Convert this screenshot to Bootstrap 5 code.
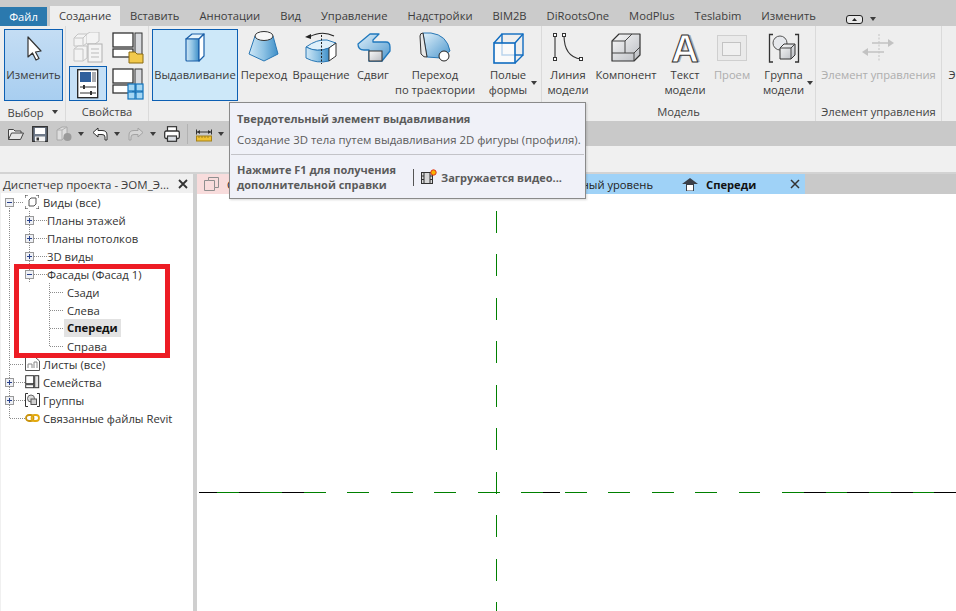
<!DOCTYPE html>
<html lang="ru">
<head>
    <meta charset="UTF-8">
    <meta name="viewport" content="width=device-width, initial-scale=1.0">
    <title>Revit - Создание</title>
    <link href="https://cdn.jsdelivr.net/npm/bootstrap@5.3.0/dist/css/bootstrap.min.css" rel="stylesheet">
    <style>
        html, body { height: 100%; overflow: hidden; }
        body { font-family: "Open Sans", "Liberation Sans", sans-serif; font-size: 11.2px; line-height: 15px; color: #3b3b3b; background: #fff; }
        svg { display: block; }
        .svg-defs { width: 0; height: 0; position: absolute; }
        .app-shell { width: 956px; height: 611px; overflow: hidden; position: relative; }

        .tab-strip { height: 26px; background: #cbcbcb; padding-top: 6px; flex-wrap: nowrap; }
        .tab-strip .nav-link { color: #3d3d3d; padding: 2px 10px 0; height: 20px; line-height: 15px; white-space: nowrap; }
        .tab-strip .tab-file { width: 47px; margin-right: 3px; background: #2b79ae; color: #fff; text-align: center; padding: 2px 0 0; margin-top: 1px; height: 19px; }
        .tab-strip .tab-on { background: #eeeeee; width: 70px; padding-left: 9px; }
        .view-toggle { margin-left: 20px; margin-top: 6px; }

        .ribbon-band { height: 95px; background: #eeeeee; overflow: hidden; }
        .rib-panel { height: 95px; border-right: 1px solid #dadada; flex: none; }
        .pw-66 { width: 66px; } .pw-83 { width: 83px; } .pw-393 { width: 393px; } .pw-274 { width: 274px; } .pw-126 { width: 126px; }
        .rib-tools { height: 77px; padding-top: 3px; }
        .rib-tail { padding-left: 6px; }
        .rib-label { height: 18px; line-height: 17px; text-align: center; color: #444; white-space: nowrap; }
        .rb { flex: none; height: 72px; text-align: center; position: relative; white-space: nowrap; }
        .bw-40 { width: 40px; } .bw-50 { width: 50px; } .bw-52 { width: 52px; } .bw-54 { width: 54px; } .bw-59 { width: 59px; }
        .bw-62 { width: 62px; } .bw-63 { width: 63px; } .bw-64 { width: 64px; } .bw-84 { width: 84px; } .bw-86 { width: 86px; }
        .rb-ic { height: 38px; padding-top: 2px; display: flex; justify-content: center; }
        .rb-on { border: 1px solid #0c5fb3; }
        .rb-on .rb-ic { padding-top: 1px; height: 37px; }
        .rb-modify { background: linear-gradient(#c4ddf4, #a8cef0); }
        .rb-hot { background: #cde8f9; margin-left: 3px; margin-right: 1px; }
        .rb-off { color: #adadad; }
        .glyph-a { font-family: "Liberation Sans", sans-serif; font-weight: 700; font-size: 38px; line-height: 36px; color: #fff; -webkit-text-stroke: 1px #333; text-shadow: 2px 0 0 #a4a7ad; }
        .drop-mark { position: absolute; right: 2px; top: 52px; }
        .prop-grid { display: grid; grid-template-columns: 38px 38px; grid-template-rows: 37px 35px; column-gap: 2px; margin-left: 3px; }
        .prop-cell { display: flex; justify-content: center; align-items: center; }
        .prop-on { border: 1px solid #0c5fb3; background: #c6e0f6; }

        .mini-caret { width: 0; height: 0; border-left: 3px solid transparent; border-right: 3px solid transparent; border-top: 4px solid #3c3c3c; flex: none; display: inline-block; }
        .qat-bar { height: 25px; background: #c9c9c9; padding-left: 8px; gap: 8px; }
        .qat-bar .mini-caret { margin-left: -2px; }
        .qat-sep { width: 1px; height: 20px; background: #b2b2b2; margin-left: -1px; }
        .options-bar { height: 26px; background: #f0f0f0; }

        .work-area { height: 439px; background: #d3d3d3; padding-top: 2px; }
        .browser-pane { width: 197px; flex: none; background: #f0f0f0; border-right: 4px solid #cfcfcf; position: relative; height: 100%; }
        .browser-head { height: 19px; padding: 1px 5px 0 3px; font-size: 11.5px; white-space: nowrap; color: #3b3b3b; }
        .browser-tree { background: #fff; height: 418px; margin-left: 1px; overflow: hidden; }
        .tree-row { height: 18px; display: flex; align-items: center; white-space: nowrap; color: #333; font-size: 11.3px; }
        .t-cell { width: 20px; height: 18px; flex: none; display: flex; align-items: center; justify-content: flex-start; background-repeat: no-repeat; }
        .t-deep { width: 26px; }
        .t-wide { width: 24px; }
        .t-full { background-image: repeating-linear-gradient(to bottom, #8c8c8c 0 1px, transparent 1px 2px); background-size: 1px 18px; background-position: 8px 0; }
        .t-end { background-image: repeating-linear-gradient(to bottom, #8c8c8c 0 1px, transparent 1px 2px), repeating-linear-gradient(to right, #8c8c8c 0 1px, transparent 1px 2px); background-size: 1px 9px, 14px 1px; background-position: 8px 0, 9px 9px; }
        .t-long { background-size: 1px 9px, 16px 1px; }
        .t-tee { background-image: repeating-linear-gradient(to bottom, #8c8c8c 0 1px, transparent 1px 2px), repeating-linear-gradient(to right, #8c8c8c 0 1px, transparent 1px 2px); background-size: 1px 18px, 14px 1px; background-position: 8px 0, 9px 9px; }
        .t-boxed { background-image: repeating-linear-gradient(to bottom, #8c8c8c 0 1px, transparent 1px 2px), repeating-linear-gradient(to right, #8c8c8c 0 1px, transparent 1px 2px); background-size: 1px 18px, 14px 1px; background-position: 8px 0, 13px 9px; }
        .t-first { background-image: repeating-linear-gradient(to bottom, #8c8c8c 0 1px, transparent 1px 2px), repeating-linear-gradient(to right, #8c8c8c 0 1px, transparent 1px 2px); background-size: 1px 9px, 10px 1px; background-position: 8px 9px, 13px 9px; }
        .t-box { width: 9px; height: 9px; margin-left: 4px; border: 1px solid #999; background: #eef0f5; position: relative; flex: none; }
        .t-box::before { content: ""; position: absolute; left: 1px; top: 3px; width: 5px; height: 1px; background: #27408b; }
        .t-plus::after { content: ""; position: absolute; left: 3px; top: 1px; width: 1px; height: 5px; background: #27408b; }
        .t-ic { width: 18px; flex: none; }
        .t-current { background: #e2e2e2; font-weight: 700; color: #111; padding: 0 3px; margin-left: -3px; height: 18px; line-height: 18px; }
        .red-mark { position: absolute; left: 14px; top: 90px; width: 156px; height: 94px; border: 5px solid #ed1c24; pointer-events: none; }

        .view-pane { flex: 1; min-width: 0; background: #fff; }
        .view-tabs { height: 20px; background: #c9c9c9; white-space: nowrap; overflow: hidden; }
        .vtab { height: 20px; display: flex; align-items: center; flex: none; color: #222; }
        .vtab-start { width: 263px; background: #f8dcdc; padding-left: 7px; gap: 8px; }
        .vtab-mid { width: 210px; background: #9fd2f7; justify-content: flex-end; padding-right: 17px; }
        .vtab-now { width: 135px; background: #9fd2f7; padding-left: 12px; font-weight: 700; color: #111; }
        .vtab-now .vtab-x { margin-left: auto; margin-right: 5px; }
        .draw-area { width: 759px; height: 417px; }

        .tip-box { position: absolute; left: 229px; top: 102px; width: 357px; height: 97px; background: #f0f1f8; border: 1px solid #8a8a8a; color: #5b5b5b; padding: 8px 7px 0; box-shadow: 1px 1px 2px rgba(0,0,0,.15); }
        .tip-title { font-weight: 700; font-size: 11px; }
        .tip-desc { margin-top: 6px; white-space: nowrap; font-size: 11.4px; }
        .tip-rule { height: 1px; background: #c3c3c8; margin: 7px -6px 0; }
        .tip-foot { margin-top: 7px; font-weight: 700; font-size: 11px; }
        .tip-help { width: 176px; white-space: nowrap; }
        .tip-sep { width: 1px; height: 17px; background: #555; margin-right: 7px; }
        .tip-video { white-space: nowrap; gap: 4px; }
    </style>
</head>
<body>

<svg class="svg-defs">
    <defs>
        <linearGradient id="gBlue" x1="0" y1="0" x2="1" y2="1"><stop offset="0" stop-color="#dff0fa"/><stop offset="1" stop-color="#4d97cd"/></linearGradient>
        <linearGradient id="gSide" x1="0" y1="0" x2="1" y2="0"><stop offset="0" stop-color="#cfe7f6"/><stop offset=".5" stop-color="#8dc2e4"/><stop offset="1" stop-color="#3f8fc8"/></linearGradient>
        <linearGradient id="gGrey" x1="0" y1="0" x2="1" y2="1"><stop offset="0" stop-color="#fafafa"/><stop offset="1" stop-color="#b9bcc2"/></linearGradient>
    </defs>
</svg>

<div class="app-shell">
    <!-- ribbon tabs -->
    <nav class="nav tab-strip">
        <a class="nav-link tab-file" href="#">Файл</a>
        <a class="nav-link tab-on" href="#">Создание</a>
        <a class="nav-link" href="#">Вставить</a>
        <a class="nav-link" href="#">Аннотации</a>
        <a class="nav-link" href="#">Вид</a>
        <a class="nav-link" href="#">Управление</a>
        <a class="nav-link" href="#">Надстройки</a>
        <a class="nav-link" href="#">BIM2B</a>
        <a class="nav-link" href="#">DiRootsOne</a>
        <a class="nav-link" href="#">ModPlus</a>
        <a class="nav-link" href="#">Teslabim</a>
        <a class="nav-link" href="#">Изменить</a>
        <div class="view-toggle d-flex align-items-center gap-1">
            <svg width="20" height="9" viewBox="0 0 20 9"><rect x=".5" y=".5" width="16" height="8" rx="2.5" fill="#e8e8e8" stroke="#222"/><path d="M6 6 H11 L8.500 3 Z" fill="#222"/></svg>
            <span class="mini-caret"></span>
        </div>
    </nav>

    <!-- ribbon -->
    <div class="ribbon-band d-flex">
        <div class="rib-panel pw-66">
            <div class="rib-tools ps-1">
                <div class="rb rb-on bw-59 rb-modify">
                    <div class="rb-ic"><svg width="36" height="36" viewBox="0 0 36 36"><path d="M12 6 V26 L16.500 22 L20 29 L23 27.500 L19.500 21 L25 20 Z" fill="#fff" stroke="#333" stroke-width="1.200" stroke-linejoin="round"/></svg></div>
                    <div>Изменить</div>
                </div>
            </div>
            <div class="rib-label d-flex align-items-center justify-content-center gap-2"><span>Выбор</span><span class="mini-caret"></span></div>
        </div>

        <div class="rib-panel pw-83">
            <div class="rib-tools">
                <div class="prop-grid">
                    <div class="prop-cell"><svg width="31" height="31" viewBox="0 0 31 31"><g fill="#f3f3f3" stroke="#c4c4c4"><path d="M1 6 L5 2 H14 V11 L10 14 H1 Z"/><path d="M14 2 L17 0 H26 V9 L22 12 H14"/><path d="M1 17 L5 14 H14 V26 L10 29 H1 Z"/><path d="M1 6 H10 V14 M10 6 L14 2 M1 17 H10 V29"/></g><rect x="15" y="12" width="14" height="18" fill="#f4f4f4" stroke="#b0b0b0"/><path d="M18 17 H26 M18 21 H26 M18 25 H26" stroke="#bbb"/></svg></div>
                    <div class="prop-cell"><svg width="32" height="32" viewBox="0 0 32 32"><rect x="1" y="1" width="20" height="14" fill="#fff" stroke="#333" stroke-width="1.300"/><rect x="23" y="1" width="7" height="24" fill="#d8dade" stroke="#333" stroke-width="1"/><rect x="1" y="17" width="20" height="8" fill="#fff" stroke="#333" stroke-width="1.300"/><path d="M17 20 H23 L25 22 H31 V31 H17 Z" fill="#f2c94c" stroke="#8a6a10"/></svg></div>
                    <div class="prop-cell prop-on"><svg width="22" height="30" viewBox="0 0 22 30"><rect x=".7" y=".7" width="20" height="28" fill="#fff" stroke="#222" stroke-width="1.300"/><rect x="3" y="3" width="11" height="10" fill="#2f5f9c"/><rect x="15" y="3" width="4" height="10" fill="#a9abb0"/><path d="M3 18 H19 M3 24 H19" stroke="#333"/><rect x="6" y="16" width="2" height="4" fill="#333"/><rect x="13" y="22" width="2" height="4" fill="#333"/></svg></div>
                    <div class="prop-cell"><svg width="32" height="32" viewBox="0 0 32 32"><rect x="1" y="1" width="20" height="14" fill="#fff" stroke="#333" stroke-width="1.300"/><rect x="23" y="1" width="7" height="24" fill="#d8dade" stroke="#333" stroke-width="1"/><rect x="1" y="17" width="20" height="8" fill="#fff" stroke="#333" stroke-width="1.300"/><g fill="#a5d6f3" stroke="#1173bd" stroke-width="1.200"><rect x="16" y="16" width="7" height="7"/><rect x="24" y="16" width="7" height="7"/><rect x="16" y="24" width="7" height="7"/><rect x="24" y="24" width="7" height="7"/></g></svg></div>
                </div>
            </div>
            <div class="rib-label">Свойства</div>
        </div>

        <div class="rib-panel d-flex pw-393">
            <div class="rib-tools d-flex">
                <div class="rb rb-on rb-hot bw-86">
                    <div class="rb-ic"><svg width="36" height="36" viewBox="0 0 36 36"><path d="M9 8 L15 3 H27 L22 8 Z" fill="#e4f3fb" stroke="#1a5fa8" stroke-width="1.200" stroke-linejoin="round"/><path d="M9 8 H22 V30 H10 Q9 30 9 29 Z" fill="url(#gSide)" stroke="#1a5fa8" stroke-width="1.200"/><path d="M22 8 L27 3 V25 L22 30 Z" fill="#fff" stroke="#1a5fa8" stroke-width="1.200" stroke-linejoin="round"/></svg></div>
                    <div>Выдавливание</div>
                </div>
                <div class="rb bw-50">
                    <div class="rb-ic"><svg width="36" height="36" viewBox="0 0 36 36"><path d="M9 5 L3 23 L18 30 L32 23 L27 5 Z" fill="url(#gSide)" stroke="#2a78b5" stroke-linejoin="round"/><ellipse cx="18" cy="5" rx="9" ry="4.500" fill="#f7f7f7" stroke="#333"/></svg></div>
                    <div>Переход</div>
                </div>
                <div class="rb bw-64">
                    <div class="rb-ic"><svg width="36" height="36" viewBox="0 0 36 36"><path d="M6 6 Q19 -1 31 5" fill="none" stroke="#222" stroke-width="1.200"/><path d="M2 6 L8 3 L8 8 Z" fill="#222"/><path d="M3 16 Q14 8 24 9 L33 12 L26 17 Q14 22 3 16 Z" fill="#dff0fa" stroke="#2a78b5"/><path d="M3 16 Q14 22 26 17 V30 Q14 33 3 27 Z" fill="url(#gSide)" stroke="#2a78b5"/><path d="M26 17 L33 12 V25 L26 30 Z" fill="#fff" stroke="#333"/><path d="M18.500 4 V33" stroke="#222" stroke-dasharray="2 1.500"/></svg></div>
                    <div>Вращение</div>
                </div>
                <div class="rb bw-40">
                    <div class="rb-ic"><svg width="36" height="36" viewBox="0 0 36 36"><path d="M3 13 L15 3 H24 L18 9 V11 H31 Q35 11 35 16 V20 L27 30 H14 V19 H9 Q3 19 3 13 Z" fill="url(#gBlue)" stroke="#1f78bd" stroke-width="1.300" stroke-linejoin="round"/><rect x="14" y="20" width="13" height="10" fill="url(#gGrey)" stroke="#333"/></svg></div>
                    <div>Сдвиг</div>
                </div>
                <div class="rb bw-84">
                    <div class="rb-ic"><svg width="36" height="36" viewBox="0 0 36 36"><path d="M6 2 H14 Q30 4 33 20 L24 27 L10 26 Z" fill="url(#gBlue)" stroke="#2a78b5"/><path d="M3 5 Q3 2 6 2 L10 26 Q7 27 4 23 Z" fill="#e8e8e8" stroke="#333"/><circle cx="27" cy="25" r="5" fill="#fff" stroke="#222"/></svg></div>
                    <div>Переход</div><div>по траектории</div>
                </div>
                <div class="rb bw-62">
                    <div class="rb-ic"><svg width="36" height="36" viewBox="0 0 36 36"><rect x="12" y="3" width="21" height="21" fill="none" stroke="#0f6cc0" stroke-width="1.400"/><path d="M12 3 L4 12 M33 3 L25 12 M33 24 L25 32" stroke="#0f6cc0" stroke-width="1.400"/><rect x="4" y="12" width="21" height="20" fill="#fff" fill-opacity=".7" stroke="#0f6cc0" stroke-width="1.600"/></svg></div>
                    <div>Полые</div><div>формы</div>
                    <span class="mini-caret drop-mark"></span>
                </div>
            </div>
        </div>

        <div class="rib-panel pw-274">
            <div class="rib-tools d-flex">
                <div class="rb bw-52">
                    <div class="rb-ic"><svg width="36" height="36" viewBox="0 0 36 36"><path d="M5 4 V28" stroke="#333" stroke-width="1.100"/><path d="M14 4 Q14 26 31 28" fill="none" stroke="#333" stroke-width="1.100"/><g fill="#fff" stroke="#333"><rect x="3.500" y="2.500" width="3" height="3"/><rect x="3.500" y="26.500" width="3" height="3"/><rect x="12.500" y="2.500" width="3" height="3"/><rect x="29.500" y="26.500" width="3" height="3"/></g></svg></div>
                    <div>Линия</div><div>модели</div>
                </div>
                <div class="rb bw-64">
                    <div class="rb-ic"><svg width="36" height="36" viewBox="0 0 36 36"><path d="M4 10 L11 3 H32 V24 L26 30 H4 Z" fill="url(#gGrey)" stroke="#333" stroke-width="1.200" stroke-linejoin="round"/><path d="M4 10 H17 V22 H4 M17 10 L24 3 M17 22 H26 V30 M26 22 L32 16" fill="none" stroke="#444"/></svg></div>
                    <div>Компонент</div>
                </div>
                <div class="rb bw-54">
                    <div class="rb-ic"><span class="glyph-a">A</span></div>
                    <div>Текст</div><div>модели</div>
                </div>
                <div class="rb rb-off bw-40">
                    <div class="rb-ic"><svg width="36" height="36" viewBox="0 0 36 36"><rect x="3.500" y="4.500" width="29" height="25" fill="#eaeaea" stroke="#cfcfcf"/><rect x="8.500" y="11.500" width="18" height="13" fill="#f0f0f0" stroke="#c3c3c3"/></svg></div>
                    <div>Проем</div>
                </div>
                <div class="rb bw-63">
                    <div class="rb-ic"><svg width="36" height="36" viewBox="0 0 36 36"><path d="M7 3.500 H3.500 V31 H7 M29 3.500 H32.500 V31 H29" fill="none" stroke="#333" stroke-width="1.300"/><circle cx="14" cy="12" r="7" fill="#e6e8ec" stroke="#555"/><path d="M14 17 L18 13 H29 V24 L25 28 H14 Z" fill="url(#gGrey)" stroke="#333"/><path d="M14 17 H25 V28 M25 17 L29 13" fill="none" stroke="#444"/></svg></div>
                    <div>Группа</div><div>модели</div>
                    <span class="mini-caret drop-mark"></span>
                </div>
            </div>
            <div class="rib-label">Модель</div>
        </div>

        <div class="rib-panel pw-126">
            <div class="rib-tools">
                <div class="rb rb-off w-100">
                    <div class="rb-ic"><svg width="36" height="36" viewBox="0 0 36 36"><path d="M18 3 V31" stroke="#c2c2c2" stroke-dasharray="2 1.500"/><path d="M11 12 H30 M3 21 H23" stroke="#c2c2c2" stroke-width="1.500"/><path d="M27 8 L33 12 L27 16 Z M7 17 L1 21 L7 25 Z" fill="#c2c2c2"/></svg></div>
                    <div>Элемент управления</div>
                </div>
            </div>
            <div class="rib-label">Элемент управления</div>
        </div>

        <div class="rib-tools rib-tail flex-grow-1 overflow-hidden">
            <div class="rb"><div class="rb-ic"></div><div>Э</div></div>
        </div>
    </div>

    <!-- quick access bar -->
    <div class="qat-bar d-flex align-items-center">
        <svg width="16" height="16" viewBox="0 0 16 16"><path d="M.5 13.500 V3.500 H5.500 L7 5 H13 V7" fill="#f1f1f1" stroke="#444"/><path d="M.5 13.500 L3.500 7 H15.500 L12.500 13.500 Z" fill="#e4e4e4" stroke="#444"/></svg>
        <svg width="16" height="16" viewBox="0 0 16 16"><path d="M.7 .7 H15.300 V15.300 H.7 Z" fill="#6f7a8a" stroke="#333" stroke-width="1.300"/><rect x="3" y="2" width="10" height="6" fill="#fff"/><rect x="3" y="10.500" width="10" height="5" fill="#f4f4f4"/><rect x="4.500" y="11.500" width="2.500" height="3" fill="#333"/></svg>
        <svg width="16" height="16" viewBox="0 0 16 16"><path d="M1 4 L6 1 H11 V8 L6 14 H1 Z" fill="#dedede" stroke="#a8a8a8"/><path d="M6 4 V14 M1 4 H6 L11 1" fill="none" stroke="#b0b0b0"/><circle cx="11.500" cy="11" r="4" fill="#9a9a9a"/></svg>
        <span class="mini-caret"></span>
        <svg width="16" height="16" viewBox="0 0 16 16"><path d="M6 2 L1 6.500 L6 11 V8.500 H10 Q13 8.500 13 11 V14 H15 V9 Q15 4.500 10 4.500 H6 Z" fill="#fff" stroke="#333" stroke-linejoin="round"/></svg>
        <span class="mini-caret"></span>
        <svg width="16" height="16" viewBox="0 0 16 16"><path d="M10 2 L15 6.500 L10 11 V8.500 H6 Q3 8.500 3 11 V14 H1 V9 Q1 4.500 6 4.500 H10 Z" fill="#d5d5d5" stroke="#a3a3a3" stroke-linejoin="round"/></svg>
        <span class="mini-caret"></span>
        <svg width="16" height="16" viewBox="0 0 16 16"><rect x="3.500" y=".7" width="9" height="5" fill="#fff" stroke="#333" stroke-width="1.200"/><rect x=".7" y="5" width="14.600" height="7.500" rx="1.500" fill="#fff" stroke="#333" stroke-width="1.300"/><rect x="3.500" y="10" width="9" height="5.300" fill="#d9dde2" stroke="#333" stroke-width="1.200"/></svg>
        <span class="qat-sep"></span>
        <svg width="16" height="16" viewBox="0 0 16 16"><path d="M1 6 H15" stroke="#333"/><path d="M.5 3.500 V8.500 M15.500 3.500 V8.500" stroke="#333"/><path d="M1 6 L4 4 V8 Z M15 6 L12 4 V8 Z" fill="#333"/><rect x=".5" y="10" width="15" height="5" fill="#f1c232" stroke="#a3811a"/><path d="M3 10 V12 M6 10 V12 M9 10 V12 M12 10 V12" stroke="#a3811a"/></svg>
        <span class="mini-caret"></span>
    </div>
    <div class="options-bar"></div>

    <div class="work-area d-flex">
        <!-- project browser -->
        <div class="browser-pane">
            <div class="browser-head d-flex align-items-center justify-content-between">
                <span>Диспетчер проекта - ЭОМ_Э...</span>
                <svg width="10" height="10" viewBox="0 0 10 10"><path d="M1 1 L9 9 M9 1 L1 9" stroke="#333" stroke-width="1.800"/></svg>
            </div>
            <div class="browser-tree">
                <div class="tree-row"><span class="t-cell t-first t-wide"><span class="t-box"></span></span><span class="t-ic"><svg width="14" height="14" viewBox="0 0 14 14"><path d="M0 3 V0 H3 M11 0 H14 V3 M14 11 V14 H11 M3 14 H0 V11" fill="none" stroke="#333"/><path d="M4 5 L6 3 H11 V9 L9 11 H4 Z" fill="none" stroke="#555"/></svg></span><span>Виды (все)</span></div>
                <div class="tree-row"><span class="t-cell t-full"></span><span class="t-cell t-deep t-boxed"><span class="t-box t-plus"></span></span><span>Планы этажей</span></div>
                <div class="tree-row"><span class="t-cell t-full"></span><span class="t-cell t-deep t-boxed"><span class="t-box t-plus"></span></span><span>Планы потолков</span></div>
                <div class="tree-row"><span class="t-cell t-full"></span><span class="t-cell t-deep t-boxed"><span class="t-box t-plus"></span></span><span>3D виды</span></div>
                <div class="tree-row"><span class="t-cell t-full"></span><span class="t-cell t-deep t-boxed"><span class="t-box"></span></span><span>Фасады (Фасад 1)</span></div>
                <div class="tree-row"><span class="t-cell t-full"></span><span class="t-cell"></span><span class="t-cell t-deep t-tee"></span><span>Сзади</span></div>
                <div class="tree-row"><span class="t-cell t-full"></span><span class="t-cell"></span><span class="t-cell t-deep t-tee"></span><span>Слева</span></div>
                <div class="tree-row"><span class="t-cell t-full"></span><span class="t-cell"></span><span class="t-cell t-deep t-tee"></span><span class="t-current">Спереди</span></div>
                <div class="tree-row"><span class="t-cell t-full"></span><span class="t-cell"></span><span class="t-cell t-deep t-end"></span><span>Справа</span></div>
                <div class="tree-row"><span class="t-cell t-tee t-wide"></span><span class="t-ic"><svg width="15" height="14" viewBox="0 0 15 14"><path d="M.5 .5 H10.500 L14.500 4 V13.500 H.5 Z" fill="#fff" stroke="#555"/><path d="M3 11 V7 H7 V11 M9 11 V5 H12 V11" fill="none" stroke="#888"/></svg></span><span>Листы (все)</span></div>
                <div class="tree-row"><span class="t-cell t-boxed t-wide"><span class="t-box t-plus"></span></span><span class="t-ic"><svg width="15" height="14" viewBox="0 0 15 14"><rect x=".7" y=".7" width="8" height="8" fill="#fff" stroke="#333"/><rect x="9.700" y=".7" width="4" height="12" fill="#e4e4e4" stroke="#333"/><rect x=".7" y="9.700" width="8" height="3" fill="#fff" stroke="#333"/></svg></span><span>Семейства</span></div>
                <div class="tree-row"><span class="t-cell t-boxed t-wide"><span class="t-box t-plus"></span></span><span class="t-ic"><svg width="15" height="14" viewBox="0 0 15 14"><path d="M3 .5 H.5 V13.500 H3 M12 .5 H14.500 V13.500 H12" fill="none" stroke="#333"/><circle cx="6" cy="5.500" r="3.500" fill="#ddd" stroke="#666"/><rect x="6" y="6" width="5.500" height="5.500" fill="#d0d0d0" stroke="#555"/></svg></span><span>Группы</span></div>
                <div class="tree-row"><span class="t-cell t-end t-long t-wide"></span><span class="t-ic"><svg width="15" height="10" viewBox="0 0 15 10"><rect x="1" y="2" width="7.500" height="6" rx="3" fill="none" stroke="#c9930d" stroke-width="1.800"/><rect x="6.500" y="2" width="7.500" height="6" rx="3" fill="none" stroke="#e3a910" stroke-width="1.800"/></svg></span><span>Связанные файлы Revit</span></div>
            </div>
            <div class="red-mark"></div>
        </div>

        <!-- view -->
        <div class="view-pane">
            <div class="view-tabs d-flex">
                <div class="vtab vtab-start">
                    <svg width="15" height="14" viewBox="0 0 15 14"><path d="M.5 3.500 H4.500 V.5 H14.500 V10.500 H10.500 V13.500 H.5 Z" fill="none" stroke="#8f8f8f"/><path d="M4.500 3.500 H10.500 V10.500" fill="none" stroke="#8f8f8f"/></svg>
                    <span>С</span>
                </div>
                <div class="vtab vtab-mid">ный уровень</div>
                <div class="vtab vtab-now">
                    <svg class="me-2" width="16" height="13" viewBox="0 0 16 13"><path d="M8 0 L16 6 H12 V13 H4 V6 H0 Z" fill="#3a3f48"/><rect x="5" y="7" width="6" height="5.500" fill="#fff"/></svg>
                    <span>Спереди</span>
                    <svg class="vtab-x" width="10" height="10" viewBox="0 0 10 10"><path d="M1 1 L9 9 M9 1 L1 9" stroke="#333" stroke-width="1.500"/></svg>
                </div>
            </div>
            <svg class="draw-area" viewBox="197 194 759 417" shape-rendering="crispEdges">
                <g stroke-width="1" fill="none">
                    <path stroke="#000" d="M199 492.500 H217 M239 492.500 H260 M282 492.500 H304 M543 492.500 H560 M804 492.500 H826 M847 492.500 H869 M891 492.500 H913 M934 492.500 H956"/>
                    <path stroke="#008000" d="M217 492.500 H239 M260 492.500 H282 M304 492.500 H326 M347 492.500 H369 M391 492.500 H413 M434 492.500 H456 M478 492.500 H500 M521 492.500 H543 M565 492.500 H587 M608 492.500 H630 M652 492.500 H674 M695 492.500 H717 M739 492.500 H760 M782 492.500 H804 M826 492.500 H847 M869 492.500 H891 M913 492.500 H934"/>
                    <path stroke="#008000" d="M496.500 211 V233 M496.500 254 V276 M496.500 298 V320 M496.500 341 V363 M496.500 385 V407 M496.500 428 V450 M496.500 472 V494 M496.500 515 V537 M496.500 559 V581 M496.500 602 V611"/>
                </g>
            </svg>
        </div>
    </div>

    <!-- tooltip -->
    <div class="tip-box">
        <div class="tip-title">Твердотельный элемент выдавливания</div>
        <div class="tip-desc">Создание 3D тела путем выдавливания 2D фигуры (профиля).</div>
        <div class="tip-rule"></div>
        <div class="tip-foot d-flex align-items-center">
            <div class="tip-help">Нажмите F1 для получения<br>дополнительной справки</div>
            <span class="tip-sep"></span>
            <div class="tip-video d-flex align-items-center">
                <svg width="16" height="16" viewBox="0 0 16 16"><rect x=".5" y="3.500" width="11" height="11" fill="#d8d8d8" stroke="#333"/><path d="M3 3.500 V14.500 M9 3.500 V14.500 M.5 7 H3 M.5 10.500 H3 M9 7 H11.500 M9 10.500 H11.500" stroke="#333"/><circle cx="12.500" cy="3.500" r="2.700" fill="#f7b500" stroke="#e0301e"/></svg>
                <span>Загружается видео...</span>
            </div>
        </div>
    </div>
</div>

<script src="https://cdn.jsdelivr.net/npm/bootstrap@5.3.0/dist/js/bootstrap.bundle.min.js"></script>
</body>
</html>
